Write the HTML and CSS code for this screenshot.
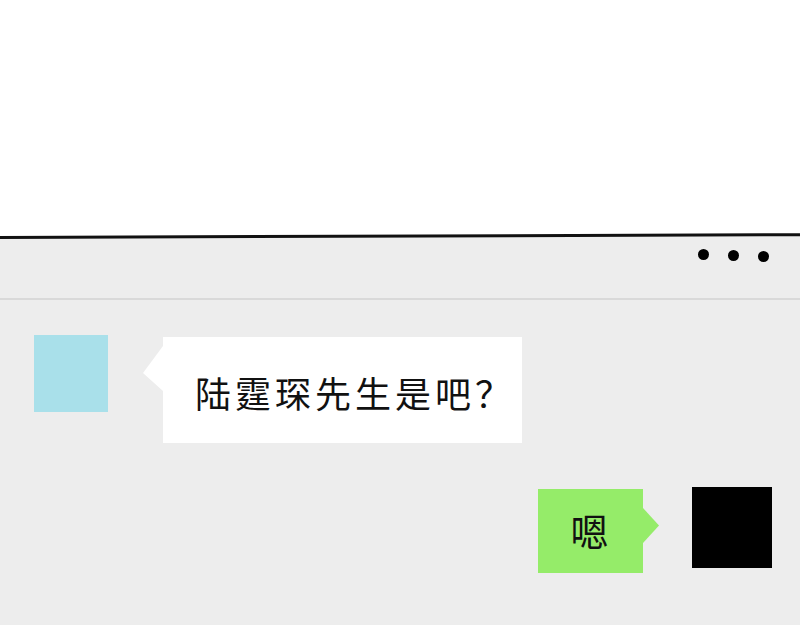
FILE: index.html
```html
<!DOCTYPE html>
<html lang="zh-CN">
<head>
<meta charset="utf-8">
<title>聊天</title>
<link rel="stylesheet" href="styles.css">
</head>
<body>
<div class="blank"></div>
<div class="phone">
    <div class="edge"></div>
    <div class="titlebar">
        <span class="dot"></span>
        <span class="dot d2"></span>
        <span class="dot d3"></span>
    </div>
    <div class="msgs">
        <div class="row left">
            <div class="avatar blue"></div>
            <div class="bubble white">陆霆琛先生是吧？</div>
        </div>
        <div class="row right">
            <div class="bubble green">嗯</div>
            <div class="avatar black"></div>
        </div>
    </div>
</div>
</body>
</html>
```

FILE: styles.css
```css
*{ padding:0; margin:0; box-sizing:border-box;}
html,body{ width:800px; height:625px; overflow:hidden; background:#fff;}
body{ font-family:"Noto Sans CJK SC","Noto Sans",sans-serif; color:#111;}

.blank{ height:235px;}
.phone{ height:390px; background:#ededed;}

/* 顶部那条略微倾斜的黑边 */
.edge{ height:3px; background:#111; transform:rotate(-0.2deg); transform-origin:left center; margin-top:1px;}

.titlebar{
    height:61px;
    border-bottom:2px solid #d9d9d9;
    display:flex;
    justify-content:flex-end;
    align-items:flex-start;
    gap:19px;
    padding:10px 31px 0 0;
}
.dot{ width:11px; height:11px; border-radius:50%; background:#000;}
.dot.d2{ margin-top:1px;}
.dot.d3{ margin-top:2px;}

.msgs{ padding-top:35px;}
.row{ display:flex; align-items:flex-start;}
.row.left{ padding-left:34px;}
.row.right{ justify-content:flex-end; padding-right:28px; margin-top:44px;}

.avatar.blue{ width:74px; height:77px; background:#a9e0ea;}
.avatar.black{ width:80px; height:81px; background:#000;}

.bubble{ position:relative; display:flex; align-items:center; line-height:1;}
.bubble::before{ content:""; position:absolute;}

.bubble.white{
    width:359px; height:106px;
    margin:2px 0 0 55px;
    padding:4px 0 0 32px;
    font-size:36px;
    letter-spacing:4px;
    background:#fff;
}
.bubble.white::before{
    left:-20px; top:9px; width:20px; height:45px;
    background:#fff;
    clip-path:polygon(100% 0, 0 60%, 100% 100%);
}

.bubble.green{
    width:105px; height:84px;
    margin:2px 49px 0 0;
    justify-content:center;
    padding:0 2px 2px 0;
    font-size:38px;
    background:#95ec69;
}
.bubble.green::before{
    right:-16px; top:19px; width:16px; height:35px;
    background:#95ec69;
    clip-path:polygon(0 0, 100% 50%, 0 100%);
}
```
